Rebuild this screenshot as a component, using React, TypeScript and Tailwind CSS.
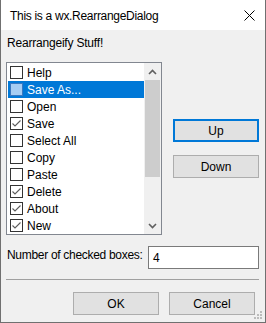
import React from "react";

const items = [
  { label: "Help", checked: false },
  { label: "Save As...", checked: false, selected: true },
  { label: "Open", checked: false },
  { label: "Save", checked: true },
  { label: "Select All", checked: false },
  { label: "Copy", checked: false },
  { label: "Paste", checked: false },
  { label: "Delete", checked: true },
  { label: "About", checked: true },
  { label: "New", checked: true },
];

function Check({ checked, selected }: { checked: boolean; selected?: boolean }) {
  return (
    <div
      className={
        selected
          ? "w-[13px] h-[13px] shrink-0 border border-[#3a78c0] bg-[#a6cdf3]"
          : "w-[13px] h-[13px] shrink-0 border border-[#333333] bg-white"
      }
    >
      {checked && (
        <svg width="11" height="11" viewBox="0 0 11 11" className="block">
          <polyline points="1.5,5.5 4,8 9.5,2.5" fill="none" stroke="#5c5c5c" strokeWidth="1.1" />
        </svg>
      )}
    </div>
  );
}

function Btn({ children, focused }: { children: React.ReactNode; focused?: boolean }) {
  return (
    <div
      className={
        focused
          ? "w-[86px] h-[23px] flex items-center justify-center bg-[#e1e1e1] border-2 border-[#0078d7]"
          : "w-[86px] h-[23px] flex items-center justify-center bg-[#e1e1e1] border border-[#adadad]"
      }
    >
      <span className="leading-[16px]">{children}</span>
    </div>
  );
}

export default function App() {
  return (
    <div className="relative w-[266px] h-[323px] flex flex-col bg-[#f0f0f0] border-x border-b border-[#707070] font-['Liberation_Sans',Arial,sans-serif] text-[12px] text-black overflow-hidden">
      <div className="h-[30px] shrink-0 bg-white flex items-start justify-between">
        <span className="pl-[9px] pt-[8px] leading-[16px] whitespace-nowrap tracking-[-0.3px]">This is a wx.RearrangeDialog</span>
        <svg width="11" height="11" viewBox="0 0 11 11" className="mt-[10px] mr-[10px]">
          <line x1="0.5" y1="0.5" x2="10.5" y2="10.5" stroke="#000" strokeWidth="1" />
          <line x1="10.5" y1="0.5" x2="0.5" y2="10.5" stroke="#000" strokeWidth="1" />
        </svg>
      </div>

      <div className="flex flex-col pl-[5px] pr-[6px]">
        <div className="mt-[5px] pl-[1px] leading-[16px] whitespace-nowrap tracking-[-0.2px]">Rearrangeify Stuff!</div>

        <div className="mt-[11px] flex items-start">
          <div className="w-[156px] h-[173px] shrink-0 border border-[#828790] bg-white flex">
            <div className="flex-1 pt-[1px] pl-[1px] flex flex-col">
              {items.map((it) => (
                <div
                  key={it.label}
                  className={
                    it.selected
                      ? "h-[17px] flex items-center bg-[#0078d7] text-white"
                      : "h-[17px] flex items-center"
                  }
                >
                  <div className="ml-[2px] mr-[4px]">
                    <Check checked={it.checked} selected={it.selected} />
                  </div>
                  <span className="leading-[16px] whitespace-nowrap">{it.label}</span>
                </div>
              ))}
            </div>
            <div className="w-[17px] bg-[#f0f0f0] flex flex-col">
              <div className="h-[17px] flex items-center justify-center">
                <svg width="9" height="6" viewBox="0 0 9 6">
                  <polyline points="1,5 4.5,1.5 8,5" fill="none" stroke="#606060" strokeWidth="1.6" />
                </svg>
              </div>
              <div className="h-[97px] mx-[1px] bg-[#cdcdcd]" />
              <div className="flex-1" />
              <div className="h-[17px] flex items-center justify-center">
                <svg width="9" height="6" viewBox="0 0 9 6">
                  <polyline points="1,1 4.5,4.5 8,1" fill="none" stroke="#606060" strokeWidth="1.6" />
                </svg>
              </div>
            </div>
          </div>

          <div className="ml-[11px] flex flex-col">
            <div className="mt-[57px]">
              <Btn focused>Up</Btn>
            </div>
            <div className="mt-[13px]">
              <Btn>Down</Btn>
            </div>
          </div>
        </div>

        <div className="mt-[11px] flex items-start justify-between">
          <span className="pl-[1px] leading-[16px] whitespace-nowrap tracking-[-0.3px] pt-[1px]">Number of checked boxes:</span>
          <div className="w-[111px] h-[23px] shrink-0 border border-[#7a7a7a] bg-white pl-[4px] pt-[2px]">
            <span className="leading-[16px]">4</span>
          </div>
        </div>

        <div className="mt-[10px] h-px bg-[#a0a0a0]" />

        <div className="mt-[12px] flex justify-end gap-[10px] pr-[4px]">
          <Btn>OK</Btn>
          <Btn>Cancel</Btn>
        </div>
      </div>

      <svg width="9" height="9" viewBox="0 0 9 9" className="absolute right-[2px] bottom-[2px]">
        <rect x="6" y="0" width="2" height="2" fill="#bcbcbc" />
        <rect x="3" y="3" width="2" height="2" fill="#bcbcbc" />
        <rect x="6" y="3" width="2" height="2" fill="#bcbcbc" />
        <rect x="0" y="6" width="2" height="2" fill="#bcbcbc" />
        <rect x="3" y="6" width="2" height="2" fill="#bcbcbc" />
        <rect x="6" y="6" width="2" height="2" fill="#bcbcbc" />
      </svg>
    </div>
  );
}
